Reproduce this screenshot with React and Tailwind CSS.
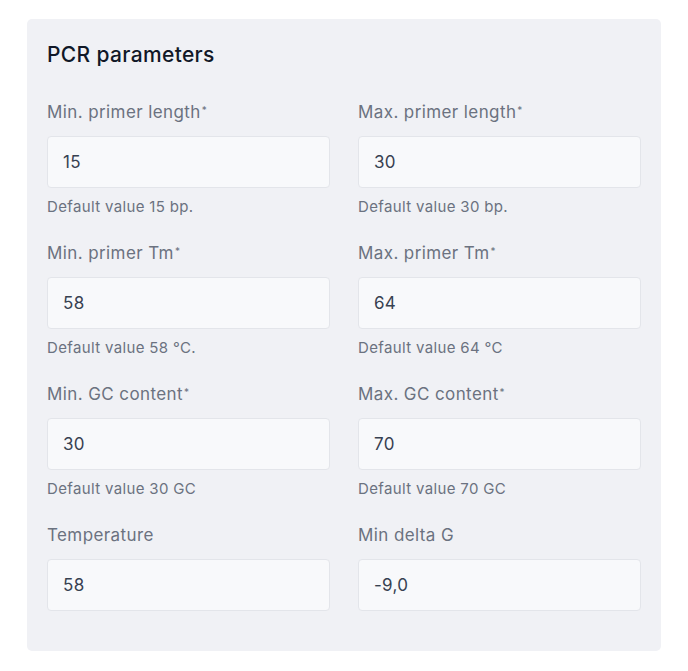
const fields = [
  { label: "Min. primer length", req: true, value: "15", help: "Default value 15 bp." },
  { label: "Max. primer length", req: true, value: "30", help: "Default value 30 bp." },
  { label: "Min. primer Tm", req: true, value: "58", help: "Default value 58 °C." },
  { label: "Max. primer Tm", req: true, value: "64", help: "Default value 64 °C" },
  { label: "Min. GC content", req: true, value: "30", help: "Default value 30 GC" },
  { label: "Max. GC content", req: true, value: "70", help: "Default value 70 GC" },
  { label: "Temperature", req: false, value: "58", help: null },
  { label: "Min delta G", req: false, value: "-9,0", help: null },
];

function Field({ f }) {
  return (
    <div className="flex flex-col">
      <div className="h-[24px] pt-[1px] leading-[24px] text-[17px] tracking-[0.4px] text-[#6b7280] flex items-start">
        <span>{f.label}</span>
        {f.req && <span className="text-[10px] leading-none ml-[1px] mt-[5px]">*</span>}
      </div>
      <div className="mt-[13px] h-[52px] rounded-[4px] border border-[#e3e5ea] bg-[#f8f9fb] flex items-center pt-[2px] px-[15px] text-[17px] tracking-[0.3px] text-[#374151]">
        {f.value}
      </div>
      {f.help && (
        <div className="mt-[9px] h-[19px] leading-[20px] text-[15px] tracking-[0.35px] text-[#6b7280]">{f.help}</div>
      )}
    </div>
  );
}

export default function App() {
  return (
    <div className="w-[688px] h-[671px] bg-white pt-[19px] pl-[27px]" style={{ fontFamily: "Inter, 'Noto Sans', sans-serif" }}>
      <div className="w-[634px] h-[632px] bg-[#f0f1f5] rounded-[5px] pt-[22px] px-[20px]">
        <div className="h-[28px] leading-[28px] text-[21px] tracking-[0.35px] font-medium text-[#111827]">PCR parameters</div>
        <div className="mt-[30px] grid grid-cols-2 gap-x-[28px] gap-y-[24px]">
          {fields.map((f) => (
            <Field key={f.label} f={f} />
          ))}
        </div>
      </div>
    </div>
  );
}
